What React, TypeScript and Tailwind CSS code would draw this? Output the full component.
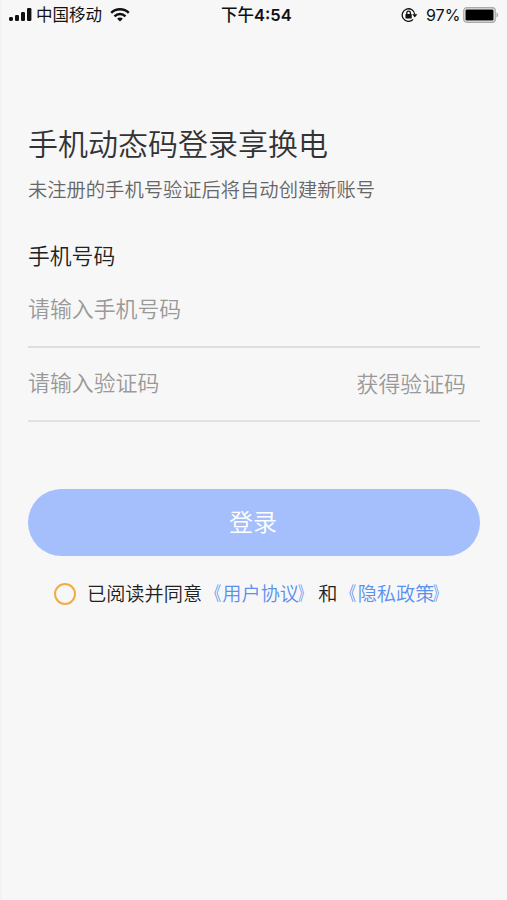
import React from "react";

const StatusBar: React.FC = () => (
  <header className="-ml-0.5 flex h-[30px] shrink-0 items-center text-[#111]">
    <div className="flex w-[221px] items-center pl-2">
      <svg viewBox="0 0 24 14" className="h-3.5 w-6" fill="currentColor">
        <rect x="1" y="9" width="4" height="4" rx="1.4" />
        <rect x="7" y="7" width="4" height="6" rx="1.2" />
        <rect x="13" y="4" width="4" height="9" rx="1.2" />
        <rect x="19" y="0" width="4.4" height="13" rx="1.2" />
      </svg>
      <span className="ml-1 w-[74px] whitespace-nowrap text-[16.5px]">中国移动</span>
      <svg viewBox="0 0 20 14" className="h-3.5 w-5" fill="none" stroke="currentColor" strokeWidth="2.5">
        <path d="M1.2 4.8C6 .2 14 .2 18.8 4.8" />
        <path d="M4.5 8.3C7.6 5.3 12.4 5.3 15.5 8.3" />
        <path d="M10 13.5 7.1 10.7C8.8 9.2 11.2 9.2 12.9 10.7Z" fill="currentColor" stroke="none" />
      </svg>
    </div>
    <span className="whitespace-nowrap text-[16.5px] font-semibold">
      <span className="font-medium">下午</span>4:54
    </span>
    <div className="ml-auto flex items-center pr-2">
      <svg viewBox="0 0 17 16" className="h-4 w-[17px]" fill="none" stroke="currentColor" strokeWidth="1.3">
        <path d="M12.1 12.4A6.3 6.3 0 1 1 13.8 7.5" />
        <path d="M11.2 7.3h5.2L13.8 10.4Z" fill="currentColor" stroke="none" />
        <rect x="4.5" y="7" width="6.2" height="4.4" rx=".5" fill="currentColor" stroke="none" />
        <path d="M5.8 7.5V6a1.8 1.8 0 0 1 3.6 0v1.5" />
      </svg>
      <span className="ml-2 w-[34px] whitespace-nowrap text-base">97%</span>
      <svg viewBox="0 0 36 16" className="ml-[3px] h-4 w-9">
        <rect x=".8" y=".8" width="31.4" height="14.4" rx="3" fill="none" stroke="#aaa" strokeWidth="1.4" />
        <rect x="2.5" y="2.5" width="28" height="11" rx="1.2" fill="#000" />
        <path d="M33.5 5.5v5c2.3-1 2.3-4 0-5Z" fill="#aaa" />
      </svg>
    </div>
  </header>
);

const PolicyLink: React.FC<{ title: string }> = ({ title }) => (
  <span className="text-[#5a90ee]">
    <span className="inline-block origin-right scale-x-75">《</span>
    <span className="ml-px">{title}</span>
    <span className="-ml-px inline-block origin-left scale-x-[.65]">》</span>
  </span>
);

export default function App() {
  return (
    <main className="flex h-[900px] flex-col border-l-2 border-[#f3f3f3] bg-[#f7f7f7] font-['Inter','Noto_Sans_CJK_SC',sans-serif]">
      <StatusBar />
      <form className="flex flex-col pr-[27px] pl-[26px] pt-[92px]">
        <h1 className="text-[30px] font-[350] leading-[44px] text-[#333]">手机动态码登录享换电</h1>
        <p className="mt-[9px] text-[19.3px] font-[350] leading-[31px] text-[#666]">未注册的手机号验证后将自动创建新账号</p>
        <label className="mt-[34px] text-[21.8px] font-[350] leading-8 text-[#222]">手机号码</label>
        <div className="flex h-[76px] items-center border-b-2 border-[#dedede] text-[21.9px] font-[350] text-[#999]">
          请输入手机号码
        </div>
        <div className="flex h-[74px] items-center justify-between border-b-2 border-[#e2e2e2] pr-3.5 text-[21.9px] font-[350] text-[#999]">
          <span className="pb-px">请输入验证码</span>
          <span>获得验证码</span>
        </div>
        <button type="button" className="mt-[67px] h-[67px] rounded-full bg-[#a4bffb] pr-0.5 text-2xl font-[350] text-white">
          登录
        </button>
        <div className="mt-[22px] flex h-8 items-center whitespace-nowrap pl-[26px] text-[19.2px] font-[350] text-[#222]">
          <span className="mr-[11px] h-[22px] w-[22px] rounded-full border-2 border-[#f0ad45]" />
          已阅读并同意
          <PolicyLink title="用户协议" />
          <span className="ml-px">和</span>
          <PolicyLink title="隐私政策" />
        </div>
      </form>
    </main>
  );
}
